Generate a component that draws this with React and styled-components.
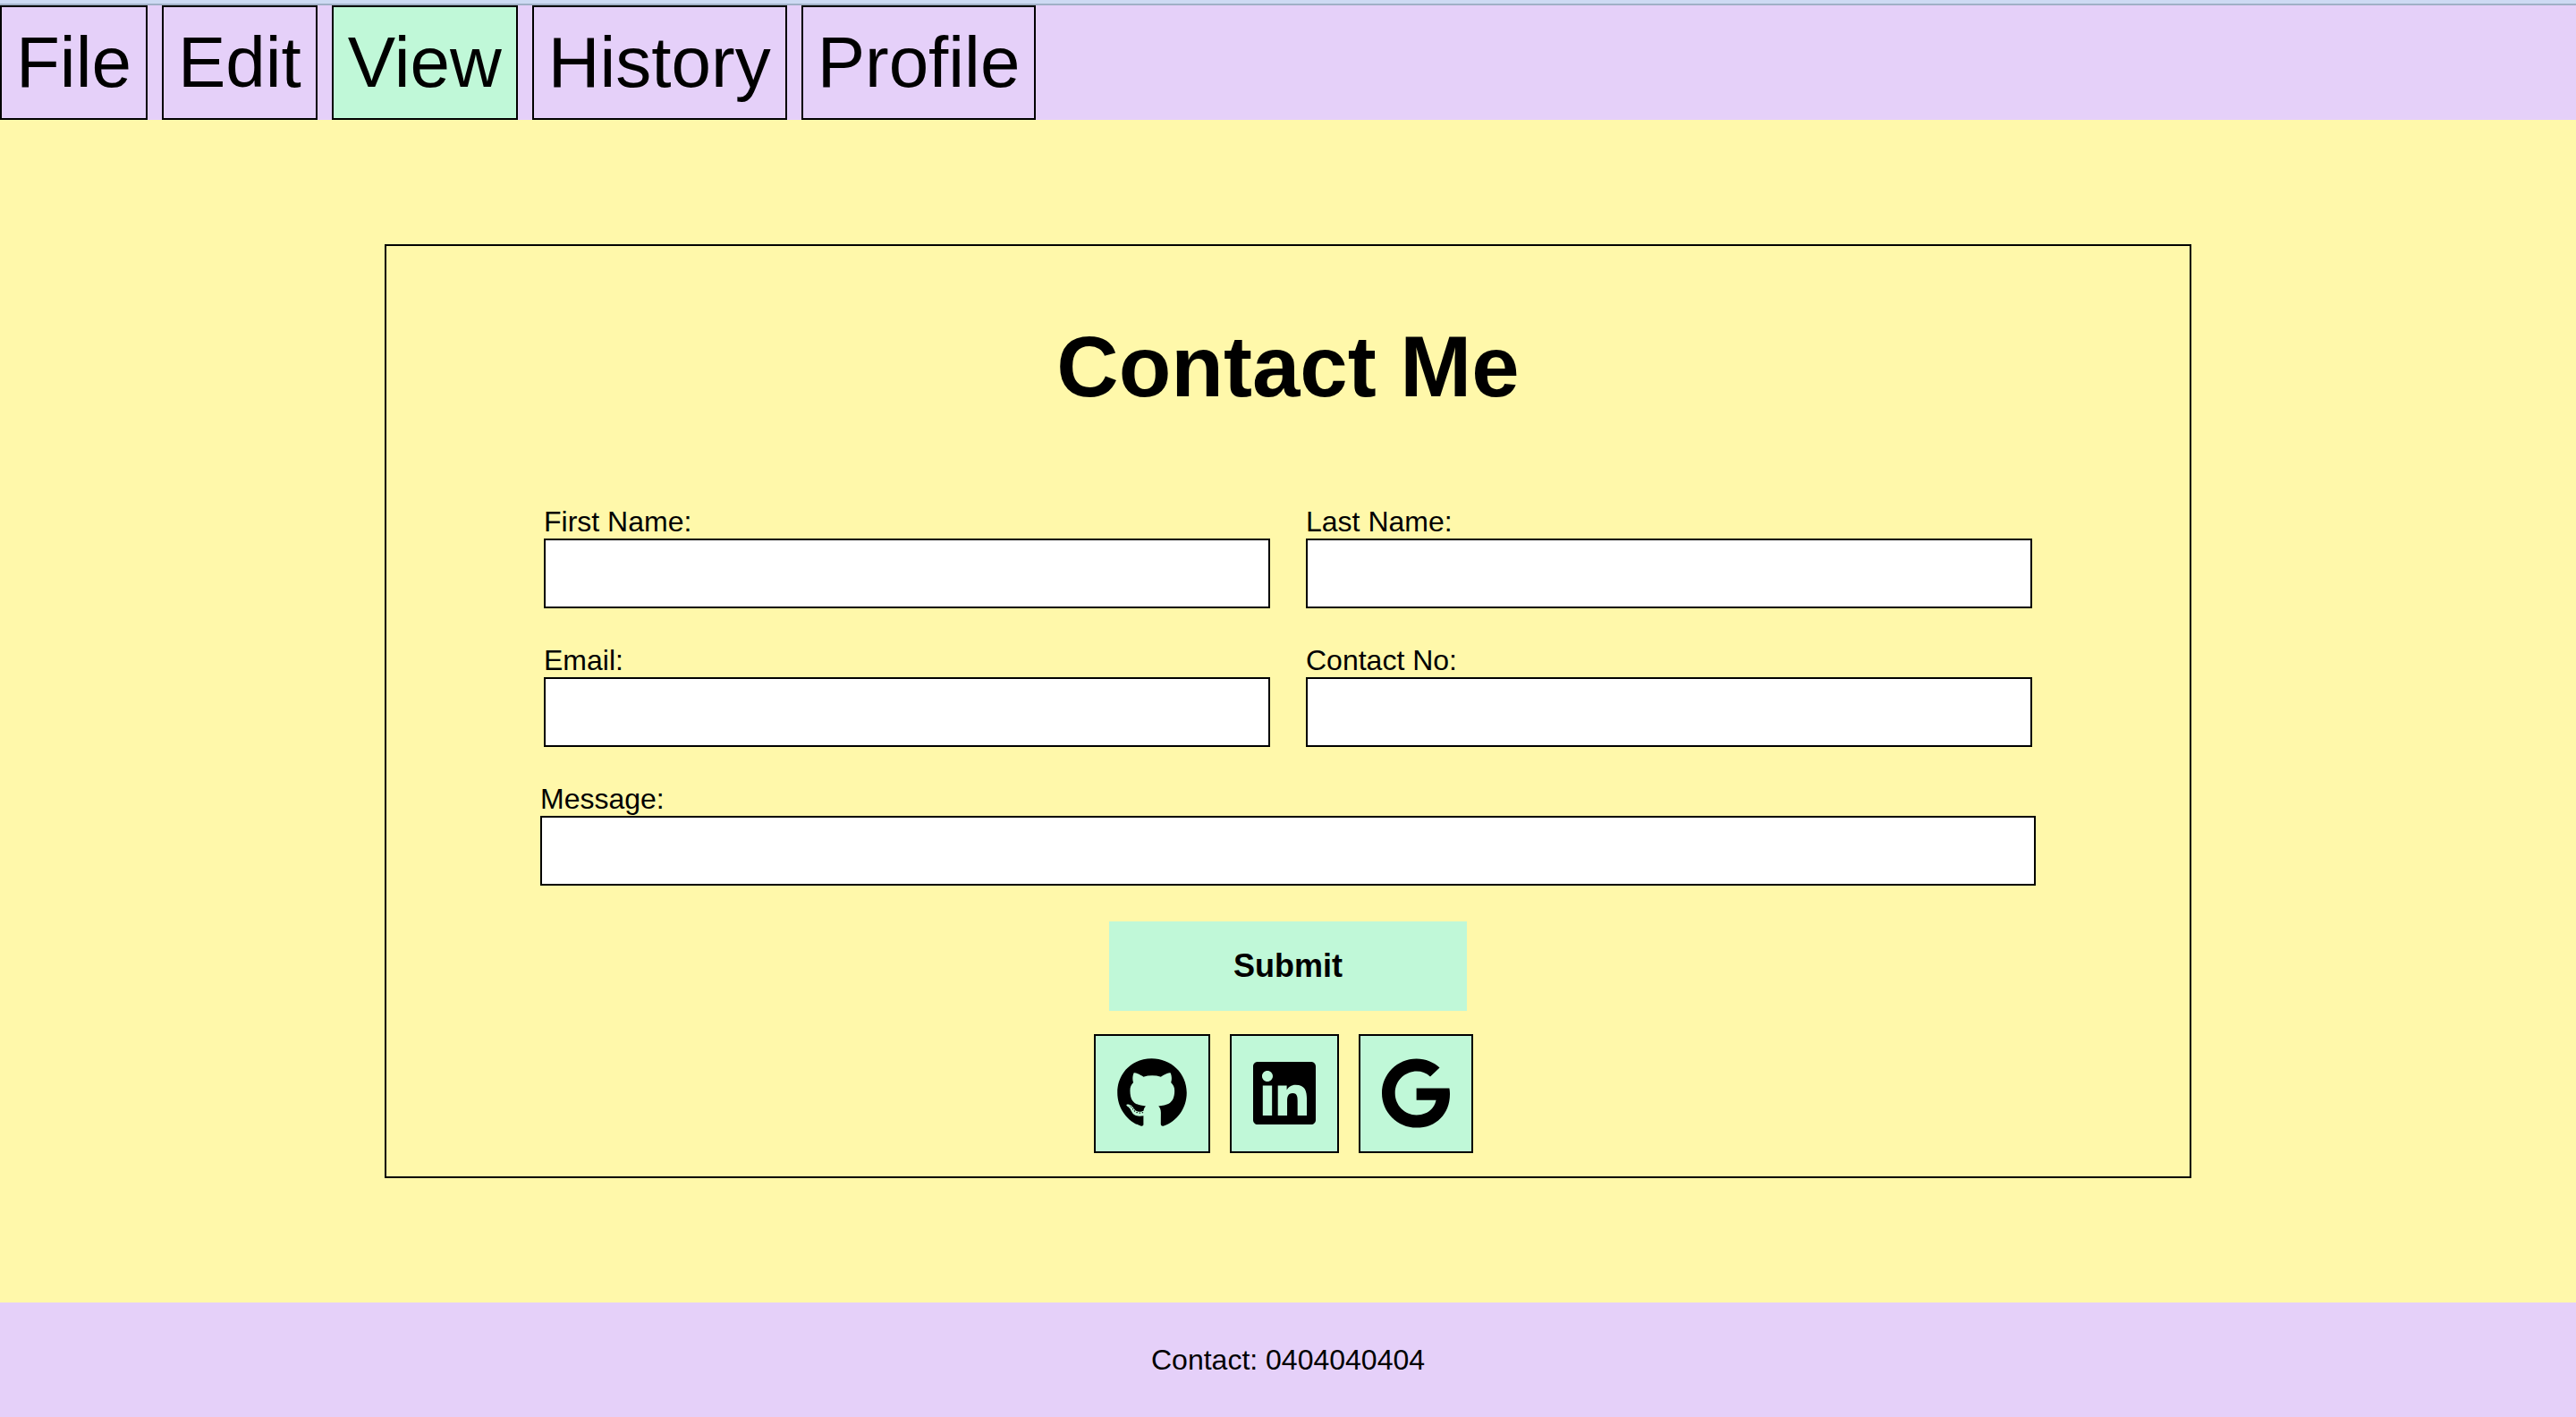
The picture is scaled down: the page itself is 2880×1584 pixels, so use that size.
import React from "react";
import styled, { createGlobalStyle } from "styled-components";
import { FaGithub, FaLinkedin, FaGoogle } from "react-icons/fa";

const color = {
  ink: "#000000",
  lilac: "#e5d0f9",
  mint: "#c0f8d8",
  butter: "#fff8aa",
  sky: "#cddaf3",
  steel: "#a0b0c6",
};

const GlobalStyle = createGlobalStyle`
  *, *::before, *::after {
    box-sizing: border-box;
  }

  body {
    margin: 0;
    color: ${color.ink};
    background: ${color.butter};
    font-family: "Liberation Sans", Arial, Helvetica, sans-serif;
    font-size: 32px;
    line-height: 37px;
  }
`;

const Page = styled.div`
  display: flex;
  flex-direction: column;
  min-height: 100vh;
`;

const Header = styled.header`
  border-top: 4px solid ${color.sky};
  background: ${color.lilac};
`;

const Nav = styled.nav`
  display: flex;
  flex-wrap: wrap;
  gap: 16px;
  border-top: 2px solid ${color.steel};
`;

const NavLink = styled.a`
  padding: 16px;
  border: 2px solid ${color.ink};
  background: ${({ $active }) => ($active ? color.mint : "transparent")};
  color: inherit;
  font-size: 80px;
  line-height: 92px;
  text-decoration: none;
`;

const Main = styled.main`
  flex: 1;
  display: flex;
  align-items: center;
  justify-content: center;
`;

const Card = styled.section`
  box-sizing: content-box;
  width: 70%;
  border: 2px solid ${color.ink};
`;

const Title = styled.h1`
  margin: 80px 0 100px;
  font-size: 96px;
  line-height: 110px;
  text-align: center;
`;

const Form = styled.form`
  display: flex;
  flex-direction: column;
  gap: 40px;
  padding: 0 172px;
`;

const FieldRow = styled.div`
  display: grid;
  grid-template-columns: 1fr 1fr;
  gap: 40px;
  padding: 0 4px;
`;

const FieldBox = styled.div`
  display: flex;
  flex-direction: column;
`;

const Input = styled.input`
  width: 100%;
  height: 78px;
  padding: 0 16px;
  border: 2px solid ${color.ink};
  border-radius: 0;
  background: #ffffff;
  font: inherit;
`;

const SubmitButton = styled.button`
  align-self: center;
  width: 400px;
  height: 100px;
  border: 0;
  background: ${color.mint};
  color: inherit;
  font-family: inherit;
  font-size: 36px;
  font-weight: bold;
  cursor: pointer;
`;

const SocialLinks = styled.div`
  display: flex;
  justify-content: center;
  gap: 22px;
  padding: 26px 10px 26px 0;
`;

const SocialLink = styled.a`
  display: flex;
  align-items: flex-start;
  height: 133px;
  padding: 24px;
  border: 2px solid ${color.ink};
  background: ${color.mint};
  color: inherit;

  svg {
    width: ${({ $iconWidth }) => $iconWidth}px;
    height: 80px;
  }
`;

const Footer = styled.footer`
  display: flex;
  align-items: center;
  justify-content: center;
  height: 128px;
  background: ${color.lilac};
`;

const menu = ["File", "Edit", "View", "History", "Profile"];

const socials = [
  { name: "GitHub", Icon: FaGithub, width: 78 },
  { name: "LinkedIn", Icon: FaLinkedin, width: 70 },
  { name: "Google", Icon: FaGoogle, width: 76 },
];

function Field({ id, label, type = "text" }) {
  return (
    <FieldBox>
      <label htmlFor={id}>{label}</label>
      <Input id={id} name={id} type={type} />
    </FieldBox>
  );
}

export default function App() {
  return (
    <Page>
      <GlobalStyle />
      <Header>
        <Nav>
          {menu.map((item) => (
            <NavLink key={item} href={`#${item.toLowerCase()}`} $active={item === "View"}>
              {item}
            </NavLink>
          ))}
        </Nav>
      </Header>
      <Main>
        <Card>
          <Title>Contact Me</Title>
          <Form onSubmit={(event) => event.preventDefault()}>
            <FieldRow>
              <Field id="firstName" label="First Name:" />
              <Field id="lastName" label="Last Name:" />
            </FieldRow>
            <FieldRow>
              <Field id="email" label="Email:" type="email" />
              <Field id="contactNo" label="Contact No:" type="tel" />
            </FieldRow>
            <Field id="message" label="Message:" />
            <SubmitButton type="submit">Submit</SubmitButton>
          </Form>
          <SocialLinks>
            {socials.map(({ name, Icon, width }) => (
              <SocialLink
                key={name}
                href={`#${name.toLowerCase()}`}
                aria-label={name}
                $iconWidth={width}
              >
                <Icon />
              </SocialLink>
            ))}
          </SocialLinks>
        </Card>
      </Main>
      <Footer>Contact: 0404040404</Footer>
    </Page>
  );
}
